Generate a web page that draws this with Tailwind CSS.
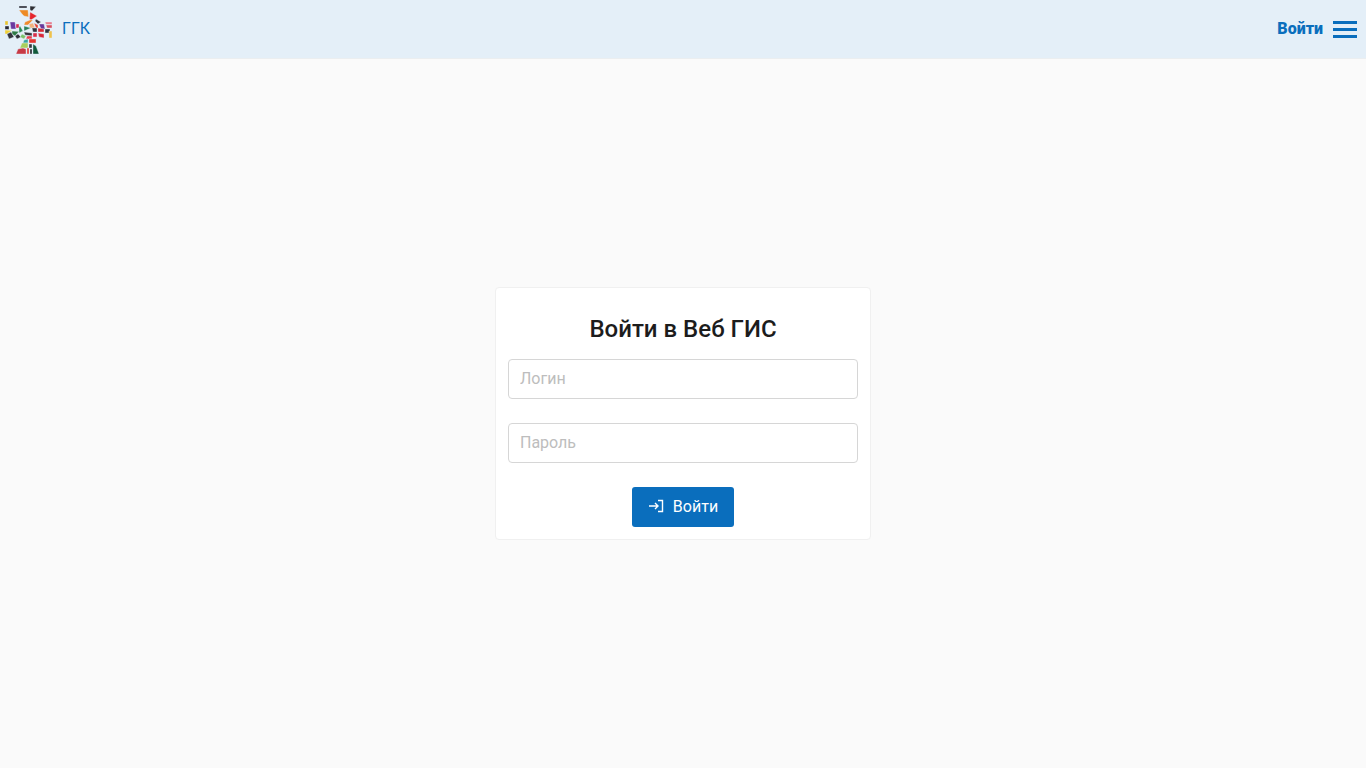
<!DOCTYPE html>
<html lang="ru">
<head>
    <meta charset="UTF-8">
    <meta name="viewport" content="width=device-width, initial-scale=1.0">
    <script src="https://cdn.jsdelivr.net/npm/@tailwindcss/browser@4"></script>
    <title>Веб ГИС</title>
</head>
<body class="h-[768px] overflow-hidden flex flex-col bg-[#fafafa] font-['Roboto',sans-serif] text-[#212121]">
    <!-- Top bar -->
    <header class="h-[59px] shrink-0 flex items-center justify-between bg-[#e4eff8] border-b border-[#ebeef0] pl-1 pr-[9px]">
        <a class="flex items-center gap-[9px] text-[#0a6ebd] text-base" href="#">
            <svg width="49" height="49" viewBox="4 4 49 49" class="shrink-0 blur-[0.3px]">
                <g stroke="#e4eff8" stroke-width="0.4">
                <polygon points="19,5 27,5 27,7 19,7" fill="#2a2a33"/>
                <polygon points="30,5 36,5.500 32,10 30,9" fill="#2f2f35"/>
                <polygon points="19,9 28,9 28.500,16 24,15 22,13" fill="#ee8a25"/>
                <polygon points="30,11 37,15 31,19 29.500,18" fill="#e5262d"/>
                <polygon points="36,18 41,21 38,23 35,20" fill="#33333a"/>
                <polygon points="25,21 30,19 33,19 28,24 24,24" fill="#f08a2c"/>
                <polygon points="29,23 33,22 35,27 30,27" fill="#f3b27c"/>
                <polygon points="34,22 38,24 38,27 36,27" fill="#e7412f"/>
                <polygon points="39,23 44,23 45,28 41,28" fill="#67379a"/>
                <polygon points="45,21 52,21 52,23.500 46,23.500" fill="#e87d8e"/>
                <polygon points="46,24 52,24 52,27 47,27" fill="#d9505e"/>
                <polygon points="5,20 8,20 8,24 5,24" fill="#e9c52f"/>
                <polygon points="10,21 15,21 16,28 11,28" fill="#6a3aa0"/>
                <polygon points="16,23 19,23 19,27 16,27" fill="#d92f53"/>
                <polygon points="24,25 31,27 24,30" fill="#2b7f57"/>
                <polygon points="20,25 23,30 19,32 19,26" fill="#2b8a50"/>
                <polygon points="5,25 9,25 9,28.500 5,28.500" fill="#2b2b33"/>
                <polygon points="5,29 12,29.500 7,33 5,33" fill="#f0d035"/>
                <polygon points="12,30 19,30.500 15,35 12,33" fill="#2f7a45"/>
                <polygon points="32,27 37,27 37,31 33,31" fill="#30303a"/>
                <polygon points="38,27 44,28 44,31 38,31" fill="#d92732"/>
                <polygon points="45,28 50,28 50,32 45,32" fill="#34343c"/>
                <polygon points="24,31 32,32 32,35 25,34" fill="#34343a"/>
                <polygon points="33,32 37,32 37,36 33,36" fill="#d9304a"/>
                <polygon points="38,32 44,33 44,37 39,36" fill="#d9273a"/>
                <polygon points="49,30 52,30 52,37 49,37" fill="#efc24d"/>
                <polygon points="7,33 11,31 14,36 9,38" fill="#33333b"/>
                <polygon points="15,35 18,33 21,36 17,38" fill="#2e2e36"/>
                <polygon points="22,33 26,35 24,38 20,36" fill="#7cc36a"/>
                <polygon points="27,35 32,35 32,38 26,38" fill="#ea3d4c"/>
                <polygon points="24,39 28,38 28,42 23,42" fill="#3aa7a0"/>
                <polygon points="29,42 29,38 36,38 36,42" fill="#e4352f"/>
                <polygon points="22,42 28,42 28,47 20,47" fill="#a8cf5c"/>
                <polygon points="29,43 32,43 32,47 29,47" fill="#34343a"/>
                <polygon points="18,48 23,47 26,48 26,53 16,53" fill="#c73a45"/>
                <polygon points="27,47 29,47 29,53 27,53" fill="#e5352f"/>
                <polygon points="30,48 32,48 32,53 30,53" fill="#222228"/>
                <polygon points="33,43 36,45 39,53 33,53" fill="#115a3c"/>
                </g>
            </svg>
            <span>ГГК</span>
        </a>
        <div class="flex items-center gap-[10px] text-[#0a6ebd]">
            <span class="text-base font-black">Войти</span>
            <span class="flex flex-col gap-[4px] w-6">
                <span class="block h-[3px] bg-[#0a6ebd]"></span>
                <span class="block h-[3px] bg-[#0a6ebd]"></span>
                <span class="block h-[3px] bg-[#0a6ebd]"></span>
            </span>
        </div>
    </header>

    <!-- Login card -->
    <main class="flex-1 flex items-center justify-center">
        <form class="w-[376px] h-[253px] bg-white border border-[#f0f0f0] rounded-[4px] px-3 pt-3 flex flex-col items-center">
            <h1 class="mt-[13px] text-2xl leading-[33px] font-medium text-[#1c1c1c]">Войти в Веб ГИС</h1>
            <input type="text" placeholder="Логин" class="mt-[13px] w-full h-10 px-[11px] pb-[2px] text-base rounded-[4px] border border-[#d6d6d6] bg-white placeholder:text-[#bdbdbd]">
            <input type="password" placeholder="Пароль" class="mt-6 w-full h-10 px-[11px] pb-[2px] text-base rounded-[4px] border border-[#d6d6d6] bg-white placeholder:text-[#bdbdbd]">
            <button type="button" class="mt-6 w-[102px] h-10 flex items-center justify-center gap-[9px] rounded-[3px] bg-[#0a6ebd] text-white text-base font-normal">
                <svg width="16" height="16" viewBox="0 0 16 16" fill="none" stroke="#fff" stroke-width="1.400">
                    <path d="M1 7h9M7 4l3 3-3 3"/>
                    <path d="M10 1.500h4.500v11H10"/>
                </svg>
                <span>Войти</span>
            </button>
        </form>
    </main>
</body>
</html>
